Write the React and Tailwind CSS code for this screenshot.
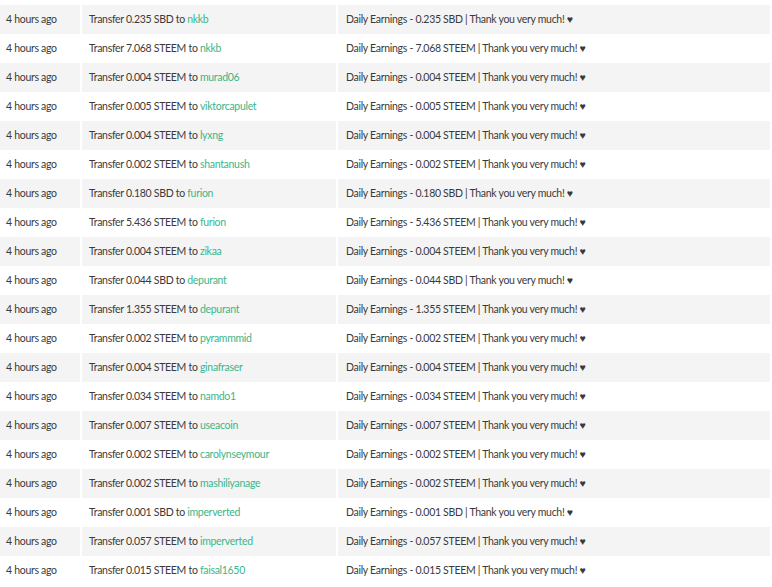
const rows = [
["0.235 SBD","nkkb"],["7.068 STEEM","nkkb"],["0.004 STEEM","murad06"],["0.005 STEEM","viktorcapulet"],["0.004 STEEM","lyxng"],["0.002 STEEM","shantanush"],["0.180 SBD","furion"],["5.436 STEEM","furion"],["0.004 STEEM","zikaa"],["0.044 SBD","depurant"],["1.355 STEEM","depurant"],["0.002 STEEM","pyrammmid"],["0.004 STEEM","ginafraser"],["0.034 STEEM","namdo1"],["0.007 STEEM","useacoin"],["0.002 STEEM","carolynseymour"],["0.002 STEEM","mashiliyanage"],["0.001 SBD","imperverted"],["0.057 STEEM","imperverted"],["0.015 STEEM","faisal1650"]];
export default function App(){
  return (
    <div className="pt-[5px] w-[772px] bg-white text-[#3a3a3a] text-[10.5px] tracking-[-0.3px]" style={{fontFamily:"Lato, sans-serif"}}>
      {rows.map(([amt,to],i)=>(
        <div key={i} className={"flex h-[29px] items-center w-[770px] "+(i%2===0?"bg-[#f4f4f4]":"bg-white")}>
          <div className="w-[82px] h-full flex items-center pl-[6px] border-r-2 border-white">4 hours ago</div>
          <div className="w-[256px] h-full flex items-center pl-[7px] border-r-2 border-white">Transfer {amt} to&nbsp;<span className="text-[#3cb58a]">{to}</span></div>
          <div className="flex-1 h-full flex items-center pl-[8px]">Daily Earnings - {amt} | Thank you very much! ♥</div>
        </div>
      ))}
    </div>
  );
}
